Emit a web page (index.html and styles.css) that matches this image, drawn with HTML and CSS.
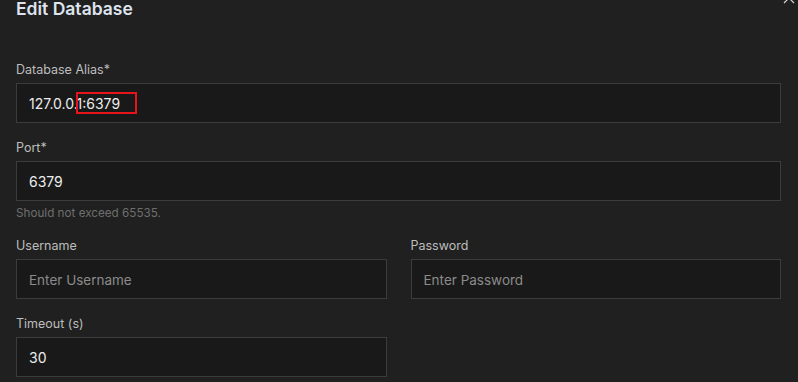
FILE: index.html
```html
<!DOCTYPE html>
<html lang="en">
<head>
    <meta charset="UTF-8">
    <meta name="viewport" content="width=device-width, initial-scale=1.0">
    <title>Edit Database</title>
    <link rel="stylesheet" href="styles.css">
</head>
<body>
    <div class="modal">
        <button class="close-btn" aria-label="Close">
            <svg width="12" height="12" viewBox="0 0 12 12">
                <path d="M1 1 L11 11 M11 1 L1 11" stroke="#d6d6d6" stroke-width="1.2" fill="none"/>
            </svg>
        </button>
        <h1 class="title">Edit Database</h1>

        <div class="field">
            <label class="label">Database Alias*</label>
            <div class="input-wrap">
                <input class="input" type="text" value="127.0.0.1:6379">
                <span class="highlight"></span>
            </div>
        </div>

        <div class="field">
            <label class="label">Port*</label>
            <input class="input" type="text" value="6379">
            <div class="helper">Should not exceed 65535.</div>
        </div>

        <div class="row">
            <div class="field">
                <label class="label">Username</label>
                <input class="input" type="text" placeholder="Enter Username">
            </div>
            <div class="field">
                <label class="label">Password</label>
                <input class="input" type="password" placeholder="Enter Password">
            </div>
        </div>

        <div class="row">
            <div class="field">
                <label class="label">Timeout (s)</label>
                <input class="input" type="text" value="30">
            </div>
            <div></div>
        </div>
    </div>
</body>
</html>
```

FILE: styles.css
```css
html, body {
    margin: 0;
    height: 100%;
    overflow: hidden;
}
body {
    background: #202020;
    font-family: Inter, "Noto Sans", sans-serif;
    color: #dcdcdc;
}
.modal {
    position: relative;
    padding: 0 17px 0 16px;
}
.close-btn {
    position: absolute;
    left: 783px;
    top: -6px;
    padding: 0;
    border: none;
    background: none;
    width: 12px;
    height: 12px;
    line-height: 0;
}
.title {
    margin: -2px 0 41px;
    font-size: 17.5px;
    line-height: 22px;
    font-weight: 600;
    color: #dfe3ee;
}
.field {
    display: flex;
    flex-direction: column;
    margin-bottom: 16px;
}
.label {
    font-size: 12.5px;
    line-height: 18px;
    color: #bdbdbd;
    margin-bottom: 4px;
}
.input-wrap {
    position: relative;
}
.input {
    box-sizing: border-box;
    width: 100%;
    height: 40px;
    padding: 0 12px;
    background: #191919;
    border: 1px solid #3c3c3c;
    border-radius: 0;
    font-family: inherit;
    font-size: 14px;
    color: #ececec;
    outline: none;
}
.input::placeholder {
    color: #8b8b8b;
    font-size: 13.5px;
}
.helper {
    margin-top: 4px;
    font-size: 11.7px;
    line-height: 16px;
    color: #6e6e6e;
}
.row {
    display: grid;
    grid-template-columns: 1fr 1fr;
    column-gap: 24px;
}
.highlight {
    position: absolute;
    left: 60px;
    top: 9px;
    width: 57px;
    height: 18px;
    border: 2px solid #e8141c;
}
```
